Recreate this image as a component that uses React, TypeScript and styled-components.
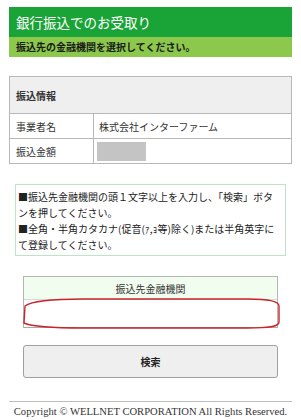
import React from 'react';
import styled, { createGlobalStyle } from 'styled-components';

const GlobalStyle = createGlobalStyle`
  body {
    margin: 0;
    background: #ffffff;
    font-family: 'Noto Sans CJK JP', 'Noto Sans', sans-serif;
    color: #222;
  }
`;

const Page = styled.div`
  width: 301px;
  padding: 7px 9px 0;
  box-sizing: border-box;
`;

const TitleBar = styled.h1`
  margin: 0;
  height: 30px;
  background: #1aa336;
  color: #ffffff;
  font-size: 13.5px;
  font-weight: 400;
  line-height: 30px;
  padding-left: 7px;
`;

const SubBar = styled.div`
  height: 20px;
  background: #8cc84b;
  color: #1a1a1a;
  font-size: 10px;
  font-weight: 700;
  line-height: 20px;
  padding-left: 7px;
`;

const InfoTable = styled.table`
  width: 100%;
  margin-top: 19px;
  border-collapse: collapse;
  font-size: 10px;
  color: #333;
`;

const HeadCell = styled.th`
  height: 36px;
  background: #efefef;
  border: 1px solid #b8b8b8;
  text-align: left;
  padding: 0 6px;
  font-weight: 700;
`;

const Cell = styled.td<{ $label?: boolean }>`
  height: 24px;
  border: 1px solid #b8b8b8;
  padding: 0 ${p => (p.$label ? '6px' : '5px')};
  width: ${p => (p.$label ? '71px' : 'auto')};
`;

const Masked = styled.div`
  width: 49px;
  height: 19px;
  background: #c4c4c4;
  margin-left: -2px;
`;

const Notice = styled.div`
  margin: 20px 6px 0;
  border: 1px solid #bfe3c6;
  padding: 4px 5px 2px 2px;
  font-size: 10px;
  line-height: 16px;
  color: #222;
`;

const FieldBox = styled.div`
  margin: 20px 14px 0;
  border: 1px solid #b4b4b4;
  border-bottom: none;
`;

const FieldLabel = styled.div`
  height: 22px;
  background: #f1fdee;
  text-align: center;
  font-size: 10px;
  line-height: 24px;
  color: #333;
`;

const InputWrap = styled.div`
  position: relative;
`;

const Input = styled.input`
  display: block;
  width: 100%;
  height: 29px;
  box-sizing: border-box;
  border: none;
  border-top: 1px solid #d8d8d8;
  border-bottom: 1px solid #a8a8a8;
  background: #fff;
  outline: none;
`;

const Ring = styled.svg`
  position: absolute;
  left: -1px;
  top: -1px;
  width: 257px;
  height: 31px;
  overflow: visible;
  pointer-events: none;
`;

const SearchButton = styled.button`
  display: block;
  width: calc(100% - 28px);
  margin: 17px 14px 0;
  height: 33px;
  border: 1px solid #a0a0a0;
  border-radius: 3px;
  background: #efefef;
  font-family: 'Noto Sans CJK JP', sans-serif;
  font-size: 10px;
  font-weight: 700;
  color: #222;
`;

const Footer = styled.footer`
  margin-top: 23px;
  border-top: 1px solid #bdbdbd;
  padding-top: 4px;
  text-align: center;
  font-family: 'Liberation Serif', serif;
  font-size: 10.6px;
  color: #333;
  white-space: nowrap;
`;

export default function App() {
  return (
    <Page>
      <GlobalStyle />
      <TitleBar>銀行振込でのお受取り</TitleBar>
      <SubBar>振込先の金融機関を選択してください。</SubBar>

      <InfoTable>
        <tbody>
          <tr>
            <HeadCell colSpan={2}>振込情報</HeadCell>
          </tr>
          <tr>
            <Cell $label>事業者名</Cell>
            <Cell>株式会社インターファーム</Cell>
          </tr>
          <tr>
            <Cell $label>振込金額</Cell>
            <Cell>
              <Masked />
            </Cell>
          </tr>
        </tbody>
      </InfoTable>

      <Notice>
        ■振込先金融機関の頭１文字以上を入力し、「検索」ボタンを押してください。
        <br />
        ■全角・半角カタカナ(促音(ｧ,ｮ等)除く)または半角英字にて登録してください。
      </Notice>

      <FieldBox>
        <FieldLabel>振込先金融機関</FieldLabel>
        <InputWrap>
          <Input type="text" />
          <Ring viewBox="0 0 257 31">
            <path
              d="M2 8 C 10 2, 40 1, 60 1 L 225 1 C 245 1, 256 3, 256 8 L 256 24 C 256 29, 245 30, 225 30 L 60 30 C 40 30, 10 29, 1 25 Z"
              fill="none"
              stroke="#c8242c"
              strokeWidth="1.4"
            />
          </Ring>
        </InputWrap>
      </FieldBox>

      <SearchButton>検索</SearchButton>

      <Footer>Copyright © WELLNET CORPORATION All Rights Reserved.</Footer>
    </Page>
  );
}
